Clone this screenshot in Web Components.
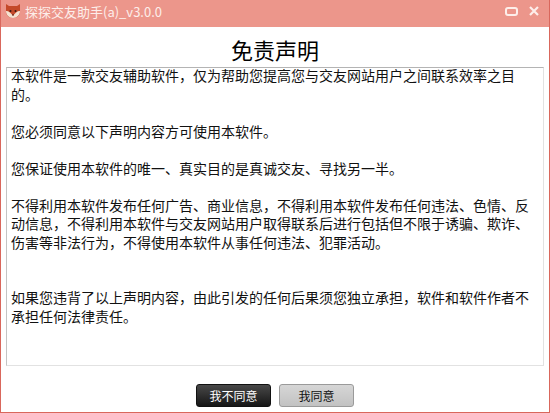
<!DOCTYPE html>
<html lang="zh">
<head>
<meta charset="utf-8">
<title>探探交友助手</title>
<style>
  html, body { margin: 0; height: 100%; }
  body { font-family: "Noto Sans CJK SC", "Liberation Sans", sans-serif; }
</style>
</head>
<body>
<app-window heading="探探交友助手(a)_v3.0.0">
  <notice-box title-text="免责声明">
    <p>本软件是一款交友辅助软件，仅为帮助您提高您与交友网站用户之间联系效率之目的。</p>
    <p>您必须同意以下声明内容方可使用本软件。</p>
    <p>您保证使用本软件的唯一、真实目的是真诚交友、寻找另一半。</p>
    <p>不得利用本软件发布任何广告、商业信息，不得利用本软件发布任何违法、色情、反动信息，不得利用本软件与交友网站用户取得联系后进行包括但不限于诱骗、欺诈、伤害等非法行为，不得使用本软件从事任何违法、犯罪活动。</p>
    <p class="gap">如果您违背了以上声明内容，由此引发的任何后果须您独立承担，软件和软件作者不承担任何法律责任。</p>
  </notice-box>
  <action-button slot="actions" dark>我不同意</action-button>
  <action-button slot="actions">我同意</action-button>
</app-window>

<script>
class AppWindow extends HTMLElement {
  constructor() {
    super();
    this.attachShadow({ mode: "open" });
    this.shadowRoot.innerHTML = `
    <style>
    :host {
      display: flex;
      flex-direction: column;
      width: 550px;
      height: 413px;
      box-sizing: border-box;
      background: #fff;
      border: solid #d9675c;
      border-width: 0 1px 1px 1px;
      overflow: hidden;
    }
    header {
      flex: none;
      height: 27px;
      background: #ec968b;
      display: flex;
      align-items: center;
      padding: 0 7px 5px 4px;
      box-sizing: border-box;
      color: #fdeeea;
      font-size: 13px;
    }
    header svg { display: block; flex: none; }
    #name { margin-left: 4px; flex: 1; white-space: nowrap; }
    #ctrls { display: flex; gap: 11px; align-items: center; margin-right: 3px; }
    main { flex: 1; display: flex; flex-direction: column; min-height: 0; padding: 0 5px; }
    #actions {
      flex: none;
      height: 46px;
      display: flex;
      justify-content: center;
      gap: 8px;
      padding-top: 18px;
      box-sizing: border-box;
    }
    </style>
    <header>
      <svg width="16" height="16" viewBox="0 0 16 16">
        <path d="M1 1l3 2h8l3-2v8c0 3-3 6-7 6s-7-3-7-6z" fill="#c4492a"/>
        <path d="M1 8c3 0 5 2 7 5 2-3 4-5 7-5 0 4-3 7-7 7s-7-3-7-7z" fill="#f4e2d2"/>
        <circle cx="5.500" cy="8" r="1" fill="#3a1c14"/>
        <circle cx="10.500" cy="8" r="1" fill="#3a1c14"/>
        <path d="M7 11.500h2l-1 1.500z" fill="#3a1c14"/>
      </svg>
      <span id="name"></span>
      <span id="ctrls">
        <svg width="13" height="9" viewBox="0 0 13 9"><rect x="1" y="1" width="11" height="7" rx="2" fill="none" stroke="#fdeeea" stroke-width="2"/></svg>
        <svg width="10" height="10" viewBox="0 0 10 10"><path d="M1 1l8 8M9 1l-8 8" stroke="#fdeeea" stroke-width="2.200" fill="none"/></svg>
      </span>
    </header>
    <main><slot></slot></main>
    <div id="actions"><slot name="actions"></slot></div>
    `;
    this.shadowRoot.getElementById("name").textContent = this.getAttribute("heading");
  }
}

class NoticeBox extends HTMLElement {
  constructor() {
    super();
    this.attachShadow({ mode: "open" });
    this.shadowRoot.innerHTML = `
    <style>
    :host { display: flex; flex-direction: column; flex: 1; min-height: 0; }
    h1 {
      margin: 0;
      height: 40px;
      line-height: 44px;
      text-align: center;
      font-size: 22px;
      font-weight: 400;
      color: #000;
    }
    #body {
      flex: 1;
      border: 1px solid #e2e2e2;
      border-top-color: #b4b4b4;
      border-left-color: #c4c4c4;
      padding: 0 4px;
      font-size: 14px;
      line-height: 18.5px;
      color: #111;
      overflow: hidden;
    }
    ::slotted(p) { margin: 0 0 18.5px 0; }
    ::slotted(p:first-child) { margin-top: -2px; }
    ::slotted(p.gap) { margin-top: 37px; }
    </style>
    <h1></h1>
    <div id="body"><slot></slot></div>
    `;
    this.shadowRoot.querySelector("h1").textContent = this.getAttribute("title-text");
  }
}

class ActionButton extends HTMLElement {
  constructor() {
    super();
    this.attachShadow({ mode: "open" });
    this.shadowRoot.innerHTML = `
    <style>
    :host {
      display: block;
      width: 75px;
      height: 23px;
      box-sizing: border-box;
      border-radius: 3px;
      font-size: 12px;
      line-height: 21px;
      text-align: center;
      border: 1px solid #9a9a9a;
      background: linear-gradient(#d6d6d6, #c2c2c2);
      color: #111;
      cursor: default;
    }
    :host([dark]) {
      border-color: #111;
      background: linear-gradient(#484848, #161616);
      color: #fff;
    }
    </style>
    <slot></slot>
    `;
  }
}

customElements.define("app-window", AppWindow);
customElements.define("notice-box", NoticeBox);
customElements.define("action-button", ActionButton);
</script>
</body>
</html>
